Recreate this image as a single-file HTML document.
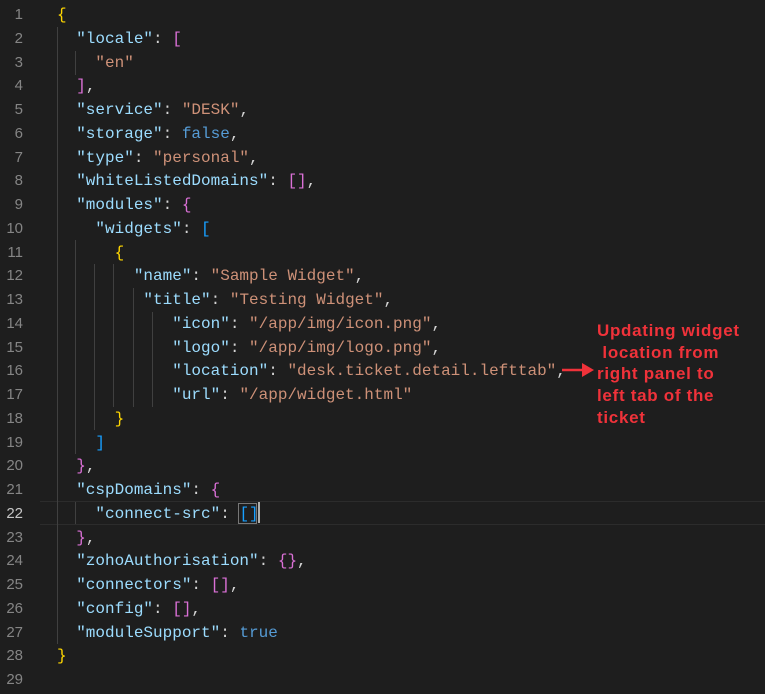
<!DOCTYPE html>
<html><head><style>
body{margin:0;width:765px;height:694px;background:#1e1e1e;overflow:hidden;position:relative;font-family:"Liberation Mono",monospace;font-size:16px}
.l{position:absolute;left:57px;height:24px;line-height:24px;white-space:pre;color:#d4d4d4}
.n{position:absolute;left:0;width:23px;text-align:right;height:24px;line-height:24px;color:#858585;font-family:"Liberation Sans",sans-serif;font-size:15px}
.k{color:#9cdcfe}.s{color:#ce9178}.b{color:#569cd6}
.y{color:#ffd700}.p{color:#da70d6}.u{color:#179fff}
.g{position:absolute;width:1px;background:#404040}
.note{position:absolute;left:597px;top:320px;color:#f0323a;font-family:"Liberation Sans",sans-serif;font-weight:bold;font-size:17px;letter-spacing:0.7px;line-height:21.7px;white-space:pre}
</style></head><body>
<div style="position:absolute;left:40px;right:0;top:501px;height:22px;border-top:1px solid #2c2c2c;border-bottom:1px solid #2c2c2c"></div>
<div class="g" style="left:57px;top:27px;height:617px"></div>
<div class="g" style="left:75px;top:51px;height:24px"></div>
<div class="g" style="left:75px;top:240px;height:214px"></div>
<div class="g" style="left:75px;top:502px;height:22px"></div>
<div class="g" style="left:94px;top:264px;height:166px"></div>
<div class="g" style="left:113px;top:264px;height:143px"></div>
<div class="g" style="left:133px;top:288px;height:119px"></div>
<div class="g" style="left:152px;top:312px;height:95px"></div>
<div id="c"></div>
<div style="position:absolute;left:238px;top:503px;width:17px;height:19px;border:1px solid #777"></div>
<div style="position:absolute;left:258px;top:502px;width:2px;height:21px;background:#aeafad"></div>
<svg style="position:absolute;left:560px;top:362px" width="36" height="16"><line x1="2" y1="8" x2="24" y2="8" stroke="#f0323a" stroke-width="2.5"/><polygon points="22,1 34,8 22,15" fill="#f0323a"/></svg>
<div class="note">Updating widget
 location from
right panel to
left tab of the
ticket</div>
<script>
var L=[
'<span class="y">{</span>',
'  <span class="k">"locale"</span>: <span class="p">[</span>',
'    <span class="s">"en"</span>',
'  <span class="p">]</span>,',
'  <span class="k">"service"</span>: <span class="s">"DESK"</span>,',
'  <span class="k">"storage"</span>: <span class="b">false</span>,',
'  <span class="k">"type"</span>: <span class="s">"personal"</span>,',
'  <span class="k">"whiteListedDomains"</span>: <span class="p">[]</span>,',
'  <span class="k">"modules"</span>: <span class="p">{</span>',
'    <span class="k">"widgets"</span>: <span class="u">[</span>',
'      <span class="y">{</span>',
'        <span class="k">"name"</span>: <span class="s">"Sample Widget"</span>,',
'         <span class="k">"title"</span>: <span class="s">"Testing Widget"</span>,',
'            <span class="k">"icon"</span>: <span class="s">"/app/img/icon.png"</span>,',
'            <span class="k">"logo"</span>: <span class="s">"/app/img/logo.png"</span>,',
'            <span class="k">"location"</span>: <span class="s">"desk.ticket.detail.lefttab"</span>,',
'            <span class="k">"url"</span>: <span class="s">"/app/widget.html"</span>',
'      <span class="y">}</span>',
'    <span class="u">]</span>',
'  <span class="p">}</span>,',
'  <span class="k">"cspDomains"</span>: <span class="p">{</span>',
'    <span class="k">"connect-src"</span>: <span class="u">[]</span>',
'  <span class="p">}</span>,',
'  <span class="k">"zohoAuthorisation"</span>: <span class="p">{}</span>,',
'  <span class="k">"connectors"</span>: <span class="p">[]</span>,',
'  <span class="k">"config"</span>: <span class="p">[]</span>,',
'  <span class="k">"moduleSupport"</span>: <span class="b">true</span>',
'<span class="y">}</span>',
''];
var h='';
for(var i=0;i<L.length;i++){var t=3+i*23.75;
h+='<div class="n" style="top:'+t+'px;'+(i==21?'color:#c6c6c6':'')+'">'+(i+1)+'</div><div class="l" style="top:'+t+'px">'+L[i]+'</div>';}
document.getElementById('c').innerHTML=h;
</script>
</body></html>
